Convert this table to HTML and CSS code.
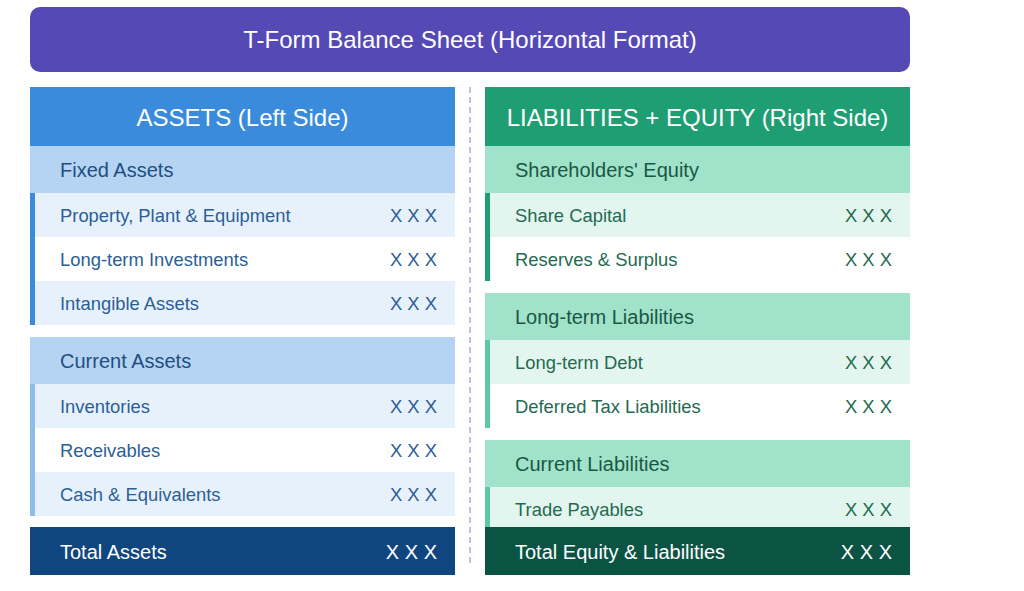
FILE: index.html
```html
<!DOCTYPE html>
<html>
<head>
<meta charset="utf-8">
<link rel="stylesheet" href="styles.css">
</head>
<body>
<div class="page">
  <div class="title">T-Form Balance Sheet (Horizontal Format)</div>
  <div class="tform">
    <section class="col assets">
      <div class="col-head">ASSETS (Left Side)</div>
      <div class="col-body">
        <div class="group">
          <div class="sub">Fixed Assets</div>
          <div class="rows strong">
            <div class="row alt"><span>Property, Plant &amp; Equipment</span><span class="amt">X X X</span></div>
            <div class="row"><span>Long-term Investments</span><span class="amt">X X X</span></div>
            <div class="row alt"><span>Intangible Assets</span><span class="amt">X X X</span></div>
          </div>
        </div>
        <div class="group">
          <div class="sub">Current Assets</div>
          <div class="rows">
            <div class="row alt"><span>Inventories</span><span class="amt">X X X</span></div>
            <div class="row"><span>Receivables</span><span class="amt">X X X</span></div>
            <div class="row alt"><span>Cash &amp; Equivalents</span><span class="amt">X X X</span></div>
          </div>
        </div>
      </div>
      <div class="total"><span>Total Assets</span><span class="amt">X X X</span></div>
    </section>
    <div class="divider"></div>
    <section class="col liab">
      <div class="col-head">LIABILITIES + EQUITY (Right Side)</div>
      <div class="col-body">
        <div class="group">
          <div class="sub">Shareholders' Equity</div>
          <div class="rows strong">
            <div class="row alt"><span>Share Capital</span><span class="amt">X X X</span></div>
            <div class="row"><span>Reserves &amp; Surplus</span><span class="amt">X X X</span></div>
          </div>
        </div>
        <div class="group">
          <div class="sub">Long-term Liabilities</div>
          <div class="rows">
            <div class="row alt"><span>Long-term Debt</span><span class="amt">X X X</span></div>
            <div class="row"><span>Deferred Tax Liabilities</span><span class="amt">X X X</span></div>
          </div>
        </div>
        <div class="group">
          <div class="sub">Current Liabilities</div>
          <div class="rows">
            <div class="row alt"><span>Trade Payables</span><span class="amt">X X X</span></div>
          </div>
        </div>
      </div>
      <div class="total"><span>Total Equity &amp; Liabilities</span><span class="amt">X X X</span></div>
    </section>
  </div>
</div>
</body>
</html>
```
FILE: styles.css
```css
* { box-sizing: border-box; }
html, body { margin: 0; padding: 0; background: #ffffff; }
body { font-family: "Liberation Sans", Arial, sans-serif; }

.page {
  width: 880px;
  margin: 7px 0 0 30px;
}

.title {
  height: 65px;
  background: #5549b5;
  color: #ffffff;
  border-radius: 10px;
  display: flex;
  align-items: center;
  justify-content: center;
  font-size: 24px;
}

.tform {
  margin-top: 15px;
  display: grid;
  grid-template-columns: 425px 30px 425px;
  height: 488px;
}

.col {
  display: flex;
  flex-direction: column;
  height: 488px;
}

.col-head {
  height: 59px;
  flex: none;
  display: flex;
  align-items: center;
  justify-content: center;
  color: #ffffff;
  font-size: 24px;
  padding-top: 2px;
}

.col-body {
  flex: 1;
  min-height: 0;
  overflow: hidden;
  display: flex;
  flex-direction: column;
  gap: 12px;
}

.sub {
  height: 47px;
  display: flex;
  align-items: center;
  padding-left: 30px;
  padding-top: 2px;
  font-size: 20px;
}

.rows { border-left: 5px solid; }

.row {
  height: 44px;
  display: flex;
  align-items: center;
  justify-content: space-between;
  padding: 2px 18px 0 25px;
  font-size: 18.4px;
  background: #ffffff;
}

.total {
  height: 48px;
  flex: none;
  display: flex;
  align-items: center;
  justify-content: space-between;
  padding: 2px 18px 0 30px;
  color: #ffffff;
  font-size: 20px;
  position: relative;
  z-index: 1;
}
.total .amt { font-size: 20px; }

.divider {
  width: 2px;
  justify-self: center;
  height: 478px;
  background: repeating-linear-gradient(to bottom, #c4bce8 0 6px, transparent 6px 10px);
}

/* Assets */
.assets .col-head { background: #3a8bdc; }
.assets .sub { background: #b5d4f3; color: #1f4e80; }
.assets .row { color: #2c5e96; }
.assets .row.alt { background: #e7f1fc; }
.assets .rows { border-left-color: #8bbcea; }
.assets .rows.strong { border-left-color: #3a8bdc; }
.assets .total { background: #0f4680; }

/* Liabilities */
.liab .col-head { background: #1f9e74; }
.liab .sub { background: #a0e2ca; color: #1a5843; }
.liab .row { color: #256a50; }
.liab .row.alt { background: #e2f6ef; }
.liab .rows { border-left-color: #5ccaa0; }
.liab .rows.strong { border-left-color: #1f9e74; }
.liab .total { background: #0b5443; }
```
